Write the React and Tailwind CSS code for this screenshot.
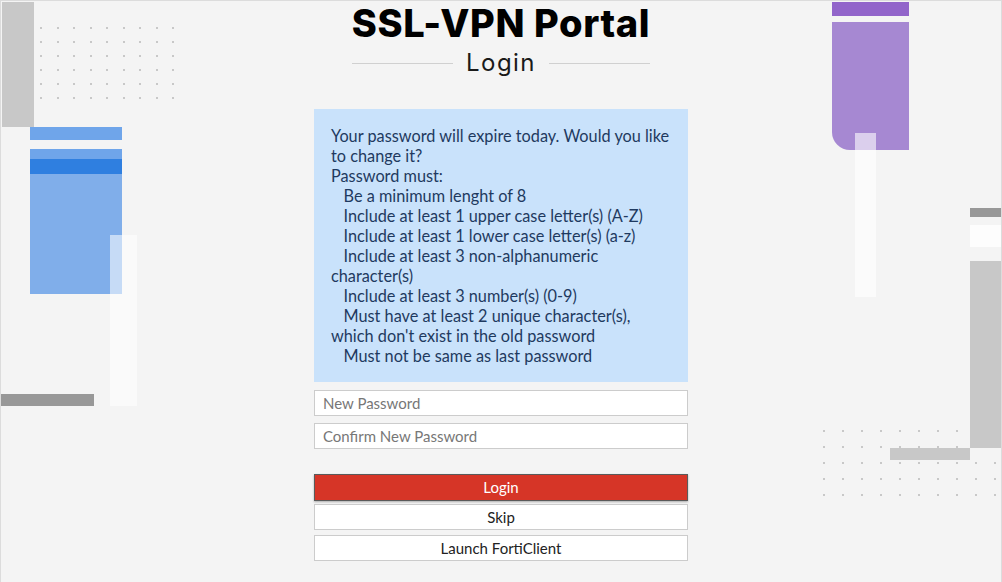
import React from "react";

const lato = { fontFamily: "Lato, 'Open Sans', sans-serif" };

const leftDots = Array.from({ length: 54 });
const rightDots = Array.from({ length: 50 });

const Decorations = () => (
  <>
    {/* left side */}
    <div className="absolute left-[1px] top-[1px] w-[32px] h-[125px] bg-[#c8c8c8]" />
    <div className="absolute left-[39px] top-[26px] grid grid-cols-9 gap-x-[14.5px] gap-y-[12px]">
      {leftDots.map((_, i) => (
        <div key={i} className="w-[2px] h-[2px] bg-[#c8c8c8]" />
      ))}
    </div>
    <div className="absolute left-[29px] top-[126px] w-[92px] h-[13px] bg-[#6fa5ea]" />
    <div className="absolute left-[29px] top-[148px] w-[92px] h-[145px] bg-[#80aeea] flex flex-col">
      <div className="h-[10px] bg-[#6fa5ea]" />
      <div className="h-[15px] bg-[#2f7fe0]" />
    </div>
    <div className="absolute left-[109px] top-[234px] w-[27px] h-[171px] bg-white/55" />
    <div className="absolute left-0 top-[393px] w-[93px] h-[12px] bg-[#989898]" />

    {/* right side */}
    <div className="absolute left-[822px] top-[429px] grid grid-cols-10 gap-x-[17px] gap-y-[14px]">
      {rightDots.map((_, i) => (
        <div key={i} className="w-[2px] h-[2px] bg-[#c8c8c8]" />
      ))}
    </div>
    <div className="absolute left-[831px] top-[1px] w-[77px] h-[14px] bg-[#9265ca]" />
    <div className="absolute left-[831px] top-[21px] w-[77px] h-[128px] bg-[#a688d2] rounded-bl-[18px]" />
    <div className="absolute left-[854px] top-[132px] w-[21px] h-[164px] bg-white/60" />
    <div className="absolute left-[969px] top-[207px] w-[31px] h-[9px] bg-[#989898]" />
    <div className="absolute left-[969px] top-[224px] w-[31px] h-[22px] bg-[#fdfdfd]" />
    <div className="absolute left-[969px] top-[260px] w-[31px] h-[187px] bg-[#c8c8c8]" />
    <div className="absolute left-[889px] top-[447px] w-[80px] h-[12px] bg-[#c8c8c8]" />
  </>
);

const rules = [
  "Be a minimum lenght of 8",
  "Include at least 1 upper case letter(s) (A-Z)",
  "Include at least 1 lower case letter(s) (a-z)",
  "Include at least 3 non-alphanumeric character(s)",
  "Include at least 3 number(s) (0-9)",
  "Must have at least 2 unique character(s), which don't exist in the old password",
  "Must not be same as last password",
];

export default function App() {
  return (
    <div className="relative w-[1002px] h-[582px] bg-[#f4f4f4] border-l border-t border-r border-[#dcdcdc] overflow-hidden">
      <Decorations />

      <div className="relative flex flex-col items-center">
        {/* Title */}
        <h1
          className="text-[38px] font-extrabold leading-[44px] tracking-[0.6px] text-black"
          style={{ fontFamily: "Inter, sans-serif" }}
        >
          SSL-VPN Portal
        </h1>
        <div className="mt-[4px] w-[298px] flex items-center gap-[13px]">
          <div className="flex-1 h-px bg-[#d0d0d0]" />
          <span
            className="text-[24px] leading-[28px] tracking-[0.06em] text-[#1a1a1a]"
            style={{ fontFamily: "Inter, sans-serif" }}
          >
            Login
          </span>
          <div className="flex-1 h-px bg-[#d0d0d0]" />
        </div>

        {/* Password notice */}
        <div
          className="mt-[32px] w-[374px] bg-[#c9e2fb] pt-[17px] pb-[16px] px-[17px] text-[16.3px] leading-[20px] text-[#1f3a60]"
          style={lato}
        >
          <p>Your password will expire today. Would you like to change it?</p>
          <p>Password must:</p>
          {rules.map((r) => (
            <p key={r}>{"\u00a0\u00a0\u00a0" + r}</p>
          ))}
        </div>

        {/* Form */}
        <div className="w-[374px] flex flex-col" style={lato}>
          <input
            type="password"
            placeholder="New Password"
            className="mt-[8px] h-[26px] border border-[#cccccc] bg-white px-[8px] text-[15px] placeholder:text-[#777777] outline-none"
          />
          <input
            type="password"
            placeholder="Confirm New Password"
            className="mt-[7px] h-[26px] border border-[#cccccc] bg-white px-[8px] text-[15px] placeholder:text-[#777777] outline-none"
          />
          <button className="mt-[25px] h-[27px] border border-[#5a5a5a] bg-[#d63527] text-white text-[15px] shadow-[0_1px_2px_rgba(0,0,0,0.3)]">
            Login
          </button>
          <button className="mt-[3px] h-[26px] border border-[#cccccc] bg-white text-[#222222] text-[15px]">
            Skip
          </button>
          <button className="mt-[5px] h-[26px] border border-[#cccccc] bg-white text-[#222222] text-[15px]">
            Launch FortiClient
          </button>
        </div>
      </div>
    </div>
  );
}
